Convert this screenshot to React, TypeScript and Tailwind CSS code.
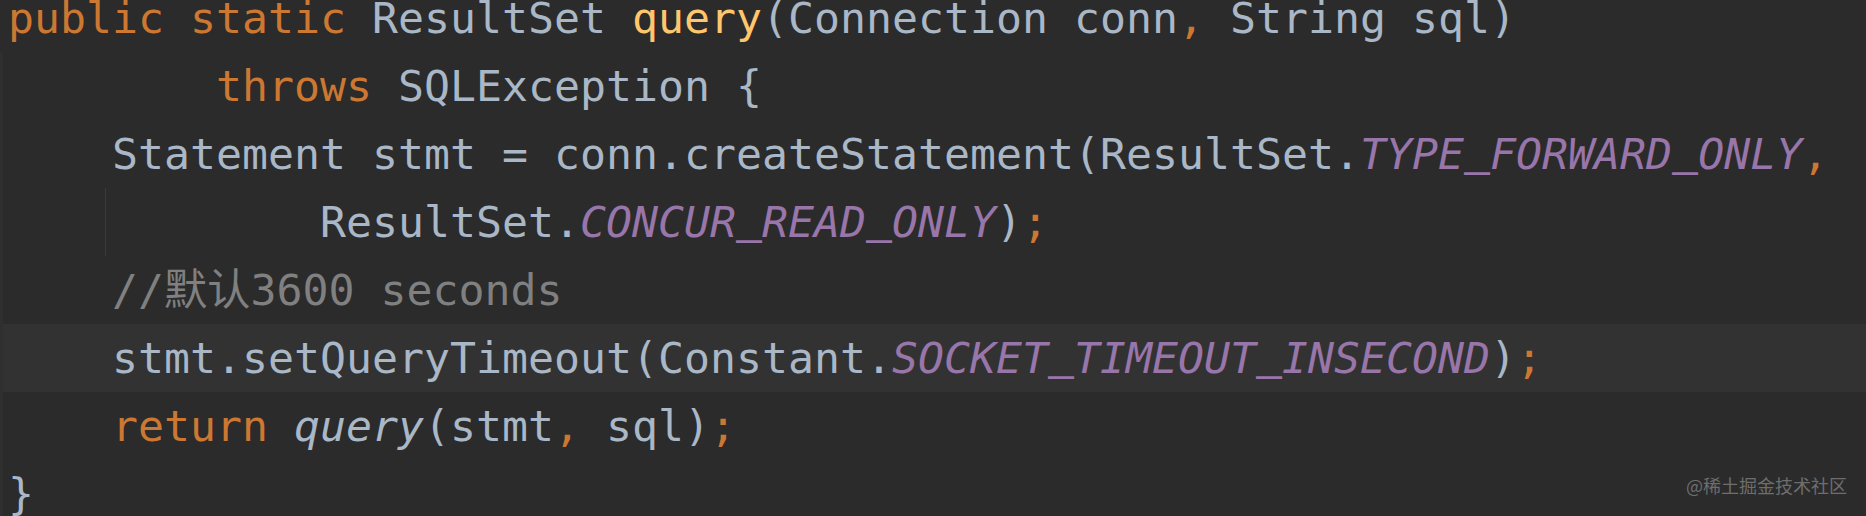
import React from "react";

type Tok = { t: string; c?: "kw" | "fn" | "const" | "cm" | "it" };

const tone: Record<string, string> = {
  kw: "text-[#cc7832]",
  fn: "text-[#ffc66d]",
  const: "text-[#9876aa] italic",
  cm: "text-[#808080]",
  it: "text-[#a9b7c6] italic",
};

const lines: Tok[][] = [
  [
    { t: "public static", c: "kw" },
    { t: " ResultSet " },
    { t: "query", c: "fn" },
    { t: "(Connection conn" },
    { t: ",", c: "kw" },
    { t: " String sql)" },
  ],
  [{ t: "        throws", c: "kw" }, { t: " SQLException {" }],
  [
    { t: "    Statement stmt = conn.createStatement(ResultSet." },
    { t: "TYPE_FORWARD_ONLY", c: "const" },
    { t: ",", c: "kw" },
  ],
  [
    { t: "            ResultSet." },
    { t: "CONCUR_READ_ONLY", c: "const" },
    { t: ")" },
    { t: ";", c: "kw" },
  ],
  [{ t: "    //默认3600 seconds", c: "cm" }],
  [
    { t: "    stmt.setQueryTimeout(Constant." },
    { t: "SOCKET_TIMEOUT_INSECOND", c: "const" },
    { t: ")" },
    { t: ";", c: "kw" },
  ],
  [
    { t: "    " },
    { t: "return", c: "kw" },
    { t: " " },
    { t: "query", c: "it" },
    { t: "(stmt" },
    { t: ",", c: "kw" },
    { t: " sql)" },
    { t: ";", c: "kw" },
  ],
  [{ t: "}" }],
];

function Const({ text }: { text: string }) {
  const parts = text.split("_");
  return (
    <>
      {parts.map((p, i) => (
        <React.Fragment key={i}>
          {i > 0 && (
            <span className="relative -top-[5px] [text-shadow:0_1px_0_currentColor]">_</span>
          )}
          {p}
        </React.Fragment>
      ))}
    </>
  );
}

export default function App() {
  return (
    <div className="relative h-[516px] w-[1866px] overflow-hidden bg-[#2b2b2b] font-['DejaVu_Sans_Mono','Noto_Sans_CJK_SC',monospace] text-[43.2px] text-[#a9b7c6]">
      <div className="-mt-[16px] flex flex-col">
        {lines.map((toks, i) => (
          <div
            key={i}
            className={
              "relative h-[68px] whitespace-pre pl-[8px] leading-[68px] " +
              (i === 5 ? "bg-[#323232] " : "") +
              (i > 0 ? "shadow-[inset_3px_0_0_#2f2f2f]" : "")
            }
          >
            {i === 3 && (
              <span className="absolute left-[105px] top-0 h-full w-px bg-[#3a3a3a]" />
            )}
            {toks.map((k, j) => (
              <span key={j} className={k.c ? tone[k.c] : ""}>
                {k.c === "const" ? <Const text={k.t} /> : k.t}
              </span>
            ))}
          </div>
        ))}
      </div>
      <div className="absolute bottom-[17px] right-[19px] font-['Noto_Sans_CJK_SC',sans-serif] text-[18px] text-[#6e6e6e]">
        @稀土掘金技术社区
      </div>
    </div>
  );
}
